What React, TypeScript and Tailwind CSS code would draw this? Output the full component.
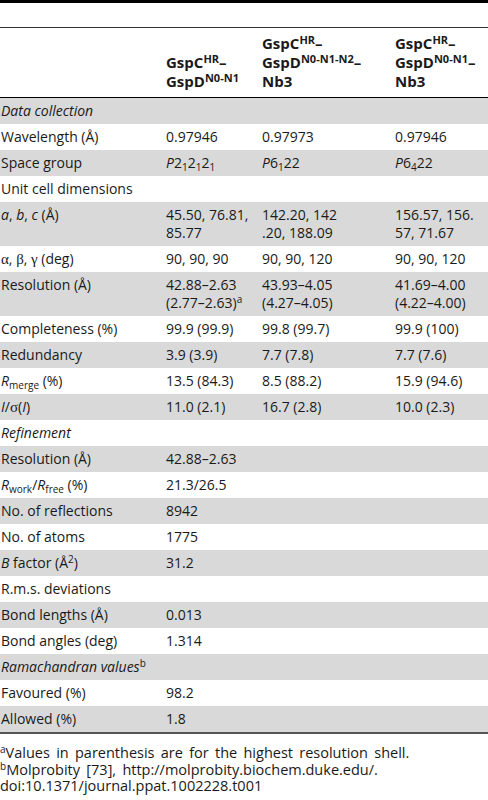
import type { ReactNode } from "react";

type Row = { label: ReactNode; cells?: ReactNode[] };

const Gr = ({ children }: { children: ReactNode }) => (
  <span className="font-['Liberation_Serif',serif] text-[15px]">{children}</span>
);

const Sub = ({ children }: { children: ReactNode }) => (
  <sub className="text-[10px] not-italic">{children}</sub>
);

const Sup = ({ children }: { children: ReactNode }) => (
  <sup className="text-[10px]">{children}</sup>
);

const rows: Row[] = [
  { label: <i>Data collection</i> },
  { label: "Wavelength (Å)", cells: ["0.97946", "0.97973", "0.97946"] },
  {
    label: "Space group",
    cells: [
      <span>
        <i>P</i>2<Sub>1</Sub>2<Sub>1</Sub>2<Sub>1</Sub>
      </span>,
      <span>
        <i>P</i>6<Sub>1</Sub>22
      </span>,
      <span>
        <i>P</i>6<Sub>4</Sub>22
      </span>,
    ],
  },
  { label: "Unit cell dimensions" },
  {
    label: (
      <span>
        <i>a</i>, <i>b</i>, <i>c</i> (Å)
      </span>
    ),
    cells: [
      <span>
        45.50, 76.81,
        <br />
        85.77
      </span>,
      <span>
        142.20, 142
        <br />
        .20, 188.09
      </span>,
      <span>
        156.57, 156.
        <br />
        57, 71.67
      </span>,
    ],
  },
  {
    label: (
      <span>
        <Gr>α</Gr>, <Gr>β</Gr>, <Gr>γ</Gr> (deg)
      </span>
    ),
    cells: ["90, 90, 90", "90, 90, 120", "90, 90, 120"],
  },
  {
    label: "Resolution (Å)",
    cells: [
      <span>
        42.88–2.63
        <br />
        (2.77–2.63)<Sup>a</Sup>
      </span>,
      <span>
        43.93–4.05
        <br />
        (4.27–4.05)
      </span>,
      <span>
        41.69–4.00
        <br />
        (4.22–4.00)
      </span>,
    ],
  },
  { label: "Completeness (%)", cells: ["99.9 (99.9)", "99.8 (99.7)", "99.9 (100)"] },
  { label: "Redundancy", cells: ["3.9 (3.9)", "7.7 (7.8)", "7.7 (7.6)"] },
  {
    label: (
      <span>
        <i>R</i>
        <Sub>merge</Sub> (%)
      </span>
    ),
    cells: ["13.5 (84.3)", "8.5 (88.2)", "15.9 (94.6)"],
  },
  {
    label: (
      <span>
        <i>I</i>/<Gr>σ</Gr>(<i>I</i>)
      </span>
    ),
    cells: ["11.0 (2.1)", "16.7 (2.8)", "10.0 (2.3)"],
  },
  { label: <i>Refinement</i> },
  { label: "Resolution (Å)", cells: ["42.88–2.63"] },
  {
    label: (
      <span>
        <i>R</i>
        <Sub>work</Sub>/<i>R</i>
        <Sub>free</Sub> (%)
      </span>
    ),
    cells: ["21.3/26.5"],
  },
  { label: "No. of reflections", cells: ["8942"] },
  { label: "No. of atoms", cells: ["1775"] },
  {
    label: (
      <span>
        <i>B</i> factor (Å<Sup>2</Sup>)
      </span>
    ),
    cells: ["31.2"],
  },
  { label: "R.m.s. deviations" },
  { label: "Bond lengths (Å)", cells: ["0.013"] },
  { label: "Bond angles (deg)", cells: ["1.314"] },
  {
    label: (
      <span>
        <i>Ramachandran values</i>
        <Sup>b</Sup>
      </span>
    ),
  },
  { label: "Favoured (%)", cells: ["98.2"] },
  { label: "Allowed (%)", cells: ["1.8"] },
];

const cols = "grid grid-cols-[164px_96px_133px_95px]";

const HeadSup = ({ children }: { children: ReactNode }) => (
  <sup className="text-[11px]">{children}</sup>
);

export default function App() {
  return (
    <div className="w-[488px] bg-white text-[#1a1a1a] font-['Open_Sans',sans-serif] text-[14px]">
      <div className="h-[3px] bg-black" />
      <div className="h-[24px]" />
      <div className="h-px bg-[#333]" />

      <div className={`${cols} h-[69px] items-end pb-[6px] text-[15px] font-bold leading-[19px]`}>
        <div />
        <div className="pl-[2px] whitespace-nowrap">
          GspC<HeadSup>HR</HeadSup>–<br />
          GspD<HeadSup>N0-N1</HeadSup>
        </div>
        <div className="pl-[2px] whitespace-nowrap">
          GspC<HeadSup>HR</HeadSup>–<br />
          GspD<HeadSup>N0-N1-N2</HeadSup>–<br />
          Nb3
        </div>
        <div className="pl-[2px] whitespace-nowrap">
          GspC<HeadSup>HR</HeadSup>–<br />
          GspD<HeadSup>N0-N1</HeadSup>–<br />
          Nb3
        </div>
      </div>
      <div className="h-px bg-black" />

      {rows.map((r, i) => (
        <div
          key={i}
          className={`${cols} py-[4px] leading-[18px] whitespace-nowrap ${i % 2 === 0 ? "bg-[#d9d9d9]" : "bg-white"}`}
        >
          <div className="pl-[1px]">{r.label}</div>
          {[0, 1, 2].map((c) => (
            <div key={c} className="pl-[2px]">
              {r.cells?.[c] ?? ""}
            </div>
          ))}
        </div>
      ))}
      <div className="h-[2px] bg-[#555]" />

      <div className="pt-[11px] text-[14.5px] leading-[16.5px] [word-spacing:2.5px]">
        <div>
          <Sup>a</Sup>Values in parenthesis are for the highest resolution shell.
        </div>
        <div>
          <Sup>b</Sup>Molprobity [73], http://molprobity.biochem.duke.edu/.
        </div>
        <div>doi:10.1371/journal.ppat.1002228.t001</div>
      </div>
    </div>
  );
}
